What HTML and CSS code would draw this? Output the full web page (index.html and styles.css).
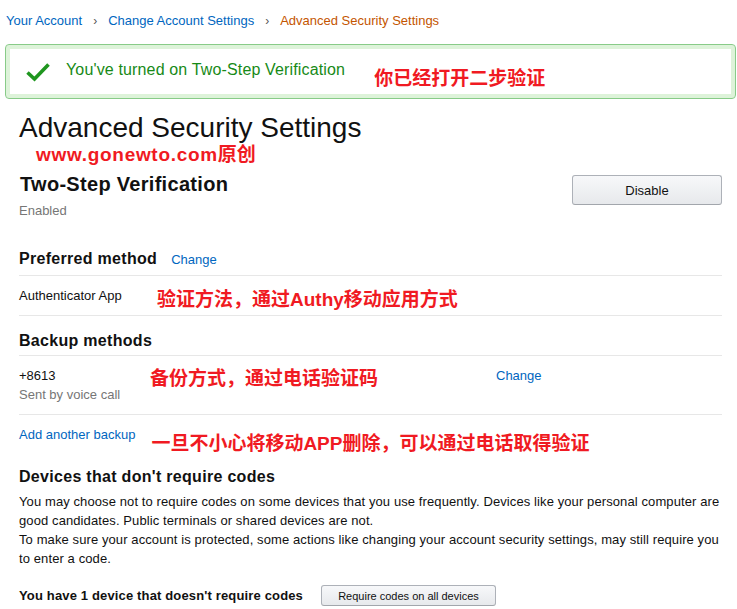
FILE: index.html
```html
<!DOCTYPE html>
<html lang="en">
<head>
<meta charset="utf-8">
<title>Advanced Security Settings</title>
<link rel="stylesheet" href="styles.css">
</head>
<body>
<nav class="crumbs">
  <a class="crumb-link" href="#">Your Account</a><span class="crumb-sep">›</span><a class="crumb-link" href="#">Change Account Settings</a><span class="crumb-sep">›</span><span class="crumb-current">Advanced Security Settings</span>
</nav>

<div class="banner">
  <svg class="banner-check" width="24" height="20" viewBox="0 0 24 20" aria-hidden="true">
    <path d="M1.5 10.5 L8.5 17 L22.5 2.5" fill="none" stroke="#1f961f" stroke-width="3.6"/>
  </svg>
  <span class="banner-text">You've turned on Two-Step Verification</span>
  <span class="note banner-note">你已经打开二步验证</span>
</div>

<main class="content">
  <h1 class="page-title">Advanced Security Settings</h1>
  <div class="note site-note"><span class="site-latin">www.gonewto.com</span>原创</div>

  <div class="tsv">
    <div>
      <h2 class="tsv-title">Two-Step Verification</h2>
      <div class="muted">Enabled</div>
    </div>
    <button class="btn btn-big" type="button">Disable</button>
  </div>

  <div class="sec-head sec-preferred">
    <h3 class="sec-title">Preferred method</h3>
    <a class="link" href="#">Change</a>
  </div>
  <div class="row row-app">
    <span class="app-label">Authenticator App</span>
    <span class="note">验证方法，通过Authy移动应用方式</span>
  </div>

  <div class="sec-head sec-backup">
    <h3 class="sec-title">Backup methods</h3>
  </div>
  <div class="row row-backup">
    <div class="backup-info">
      <div>+8613</div>
      <div class="muted">Sent by voice call</div>
    </div>
    <span class="note">备份方式，通过电话验证码</span>
    <a class="link" href="#">Change</a>
  </div>

  <div class="add-row">
    <a class="link" href="#">Add another backup</a>
    <span class="note add-note">一旦不小心将移动APP删除，可以通过电话取得验证</span>
  </div>

  <h3 class="sec-title devices-title">Devices that don't require codes</h3>
  <p class="devices-text">You may choose not to require codes on some devices that you use frequently. Devices like your personal computer are good candidates. Public terminals or shared devices are not.<br>To make sure your account is protected, some actions like changing your account security settings, may still require you to enter a code.</p>

  <div class="devices-row">
    <span class="devices-count">You have 1 device that doesn't require codes</span>
    <button class="btn btn-small" type="button">Require codes on all devices</button>
  </div>
</main>
</body>
</html>
```

FILE: styles.css
```css
* { box-sizing: border-box; }

body {
  margin: 0;
  font-family: "Liberation Sans", Arial, sans-serif;
  font-size: 13px;
  line-height: 16px;
  color: #111;
  background: #fff;
}

a { text-decoration: none; }

.crumbs {
  padding: 13px 0 0 6px;
  height: 29px;
  font-size: 13px;
  line-height: 16px;
  white-space: nowrap;
}
.crumb-link { color: #0066c0; }
.crumb-sep { color: #555; margin: 0 11px 0 11px; font-size: 12px; }
.crumb-current { color: #c45500; }

.banner {
  margin: 15px 0 0 5px;
  width: 731px;
  height: 55px;
  border: 1px solid #88cb88;
  border-radius: 4px;
  box-shadow: inset 0 0 0 4px #ddf3d9;
  display: flex;
  align-items: center;
  padding-left: 20px;
}
.banner-check { flex: none; margin-top: 1px; }
.banner-text {
  margin-left: 16px;
  color: #178a17;
  font-size: 16px;
  line-height: 18px;
  margin-top: -3px;
  letter-spacing: 0.15px;
}
.banner-note { margin-left: 29px; margin-top: 14px; }

.note {
  font-family: "Liberation Sans", "Noto Sans CJK SC", sans-serif;
  font-weight: bold;
  font-size: 19px;
  line-height: 24px;
  color: #f01a22;
  white-space: nowrap;
}

.content {
  width: 703px;
  margin-left: 19px;
}

.page-title {
  margin: 13px 0 0 0;
  font-size: 28px;
  line-height: 32px;
  font-weight: normal;
  color: #111;
}

.site-note {
  margin: -1px 0 0 17px;
  line-height: 24px;
}
.site-latin { letter-spacing: 0.7px; }

.tsv {
  display: flex;
  justify-content: space-between;
  align-items: flex-start;
  margin-top: 6px;
}
.tsv-title {
  margin: 0 0 0 1px;
  font-size: 20px;
  line-height: 22px;
  font-weight: bold;
  letter-spacing: 0.3px;
}
.tsv .muted { margin-top: 8px; }

.muted { color: #767676; }

.btn {
  font-family: "Liberation Sans", Arial, sans-serif;
  color: #111;
  border: 1px solid #adb1b8;
  border-bottom-color: #a2a6ac;
  border-radius: 3px;
  background: linear-gradient(#f7f8fa, #e7e9ec);
  padding: 0;
}
.btn-big {
  width: 150px;
  height: 30px;
  font-size: 13px;
  margin-top: 2px;
}
.btn-small {
  width: 175px;
  height: 21px;
  font-size: 11px;
  margin-left: 18px;
}

.sec-head {
  display: flex;
  align-items: baseline;
  border-bottom: 1px solid #e7e7e7;
}
.sec-preferred { margin-top: 30px; padding-bottom: 6px; }
.sec-backup { margin-top: 15px; padding-bottom: 4px; }

.sec-title {
  margin: 0;
  font-size: 16px;
  line-height: 20px;
  font-weight: bold;
  letter-spacing: 0.3px;
}
.link { color: #0066c0; }
.sec-head .link { margin-left: 14px; }

.row {
  display: flex;
  align-items: flex-start;
  border-bottom: 1px solid #e7e7e7;
}
.row-app { padding: 12px 0 10px 0; height: 40px; }
.app-label { width: 138px; flex: none; }

.row-backup {
  padding-top: 10px;
  height: 59px;
  line-height: 19px;
}
.backup-info { width: 131px; flex: none; }
.row-backup .note { width: 346px; flex: none; margin-top: 1px; }

.add-row {
  display: flex;
  align-items: flex-start;
  gap: 16px;
  padding-top: 12px;
  height: 50px;
}
.add-note { margin-top: 5px; }

.devices-title { margin-top: 2px; }

.devices-text {
  margin: 5px 0 0 0;
  line-height: 19px;
  letter-spacing: 0.1px;
}

.devices-row {
  display: flex;
  align-items: center;
  margin-top: 17px;
}
.devices-count { font-weight: bold; letter-spacing: 0.15px; }
```
